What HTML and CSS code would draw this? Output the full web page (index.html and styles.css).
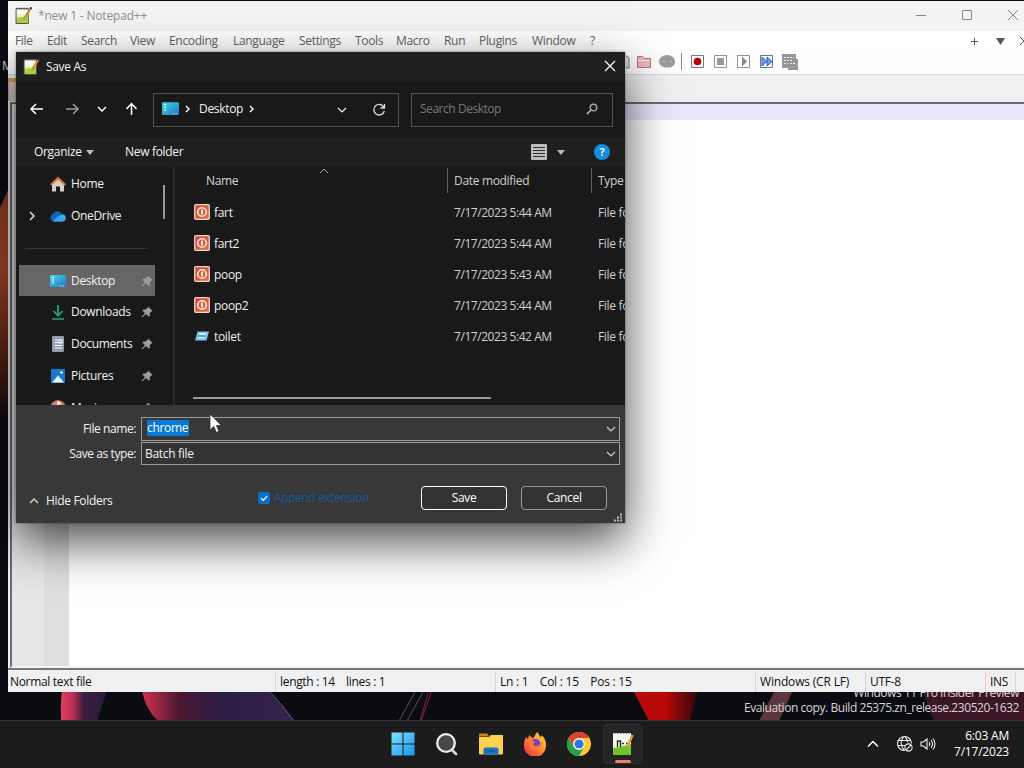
FILE: index.html
```html
<!DOCTYPE html>
<html lang="en">
  <head>
    <meta charset="UTF-8" />
    <meta name="viewport" content="width=device-width, initial-scale=1.0" />
    <title>*new 1 - Notepad++</title>
    <link rel="stylesheet" href="styles.css">
  </head>
  <body>
    <svg width="0" height="0" class="defs">
      <defs>
        <linearGradient id="gBlue" x1="0" y1="0" x2="1" y2="1"><stop offset="0" stop-color="#49d2e6"/><stop offset="1" stop-color="#1a7cc4"/></linearGradient>
        <linearGradient id="gWin" x1="0" y1="0" x2="1" y2="1"><stop offset="0" stop-color="#7fe0fb"/><stop offset="1" stop-color="#1698ee"/></linearGradient>
        <linearGradient id="gNote" x1="0" y1="0" x2="0" y2="1"><stop offset="0" stop-color="#fff"/><stop offset=".4" stop-color="#f2f6dc"/><stop offset="1" stop-color="#9ac93c"/></linearGradient>
        <linearGradient id="gPower" x1="0" y1="0" x2="1" y2="1"><stop offset="0" stop-color="#c84a3a"/><stop offset="1" stop-color="#d8774f"/></linearGradient>
        <linearGradient id="gRed" x1="0" y1="0" x2="1" y2="0"><stop offset="0" stop-color="#e04062"/><stop offset=".25" stop-color="#c02f54"/><stop offset=".5" stop-color="#3b1d3f"/><stop offset="1" stop-color="#2a1b3c"/></linearGradient>
        <linearGradient id="gPetal" x1="0" y1="0" x2="1" y2="0"><stop offset="0" stop-color="#d03050"/><stop offset=".25" stop-color="#4a1830"/><stop offset=".5" stop-color="#2c1d44"/><stop offset="1" stop-color="#33234a"/></linearGradient>
        <linearGradient id="gFlare" x1="0" y1="0" x2="1" y2="0"><stop offset="0" stop-color="#b80d0c"/><stop offset=".5" stop-color="#b80706"/><stop offset="1" stop-color="#2c0a0e"/></linearGradient>
        <linearGradient id="gOrange" x1="0" y1="0" x2="0" y2="1"><stop offset="0" stop-color="#8b3d24"/><stop offset=".35" stop-color="#a3482a"/><stop offset=".7" stop-color="#5c2412"/><stop offset="1" stop-color="#0b0c10"/></linearGradient>
        <linearGradient id="gFox" x1="1" y1="0" x2="0" y2="1"><stop offset="0" stop-color="#ffe14a"/><stop offset=".45" stop-color="#ff8a26"/><stop offset="1" stop-color="#f0265f"/></linearGradient>
        <symbol id="npp" viewBox="0 0 16 16">
          <path d="M1 1.500h11.500V15.500H1z" fill="url(#gNote)" stroke="#4d4d48" stroke-width=".9"/>
          <path d="M1.500 1.500h11" stroke="#555" stroke-width="1.600" stroke-dasharray="1.200 1"/>
          <path d="M2 11c3-2 6 0 10-3v7H2z" fill="#a8cf3c"/>
          <path d="M14.300 2L9.500 9.500 8.500 11.500" stroke="#d78a2b" stroke-width="1.900" fill="none"/>
          <path d="M15.500 .3l-1.200 1.700" stroke="#4b2b22" stroke-width="2"/>
        </symbol>
        <symbol id="monitor" viewBox="0 0 16 14">
          <rect x="0" y="1" width="16" height="12" rx="1" fill="url(#gBlue)"/>
          <path d="M2 3.500h2M2 6h2M2 8.500h2" stroke="#c9f8ff" stroke-width="1.300"/>
          <path d="M10 12h1.500M12.500 12H14" stroke="#bfeaff" stroke-width="1"/>
        </symbol>
        <symbol id="power" viewBox="0 0 16 16">
          <rect x=".7" y=".7" width="14.600" height="14.600" rx="1" fill="url(#gPower)" stroke="#f4d2c4" stroke-width="1.300"/>
          <circle cx="8" cy="8" r="4.300" fill="none" stroke="#fbe3d8" stroke-width="1.600"/>
          <path d="M8 5.500v5" stroke="#fff" stroke-width="1.600"/>
        </symbol>
        <symbol id="pin" viewBox="0 0 12 12">
          <path d="M7 .5l4.600 4.600-1.200.5-1.700 1.700.1 2.400-1.100 1L5 8.100 1.200 11.500.6 10.900 3.900 7.100 1.400 4.500l1-1.100 2.400.1L6.500 1.800z" fill="#9b9da0"/>
        </symbol>
        <symbol id="down" viewBox="0 0 10 10"><path d="M1 3l4 4 4-4" fill="none" stroke="currentColor" stroke-width="1.200"/></symbol>
      </defs>
    </svg>

    <svg class="wallpaper" viewBox="0 0 1024 768">
      <rect width="1024" height="768" fill="#0b0c11"/>
      <path d="M0 208C4 200 6 194 8 190V420H0z" fill="url(#gOrange)"/>
      <path d="M62 690h45q-5 15-10 31H61q-1-15 1-31z" fill="url(#gRed)"/>
      <path d="M142 690h125q14 14 27 31H158q-13-12-16-31z" fill="url(#gPetal)"/>
      <path d="M268 690q14 14 26 31" stroke="#6b607c" fill="none"/>
      <path d="M416 690l-17 31M424 690l-17 31" stroke="#55505a" fill="none"/>
      <path d="M432 690l-11 31M429 690l-9 31" stroke="#7d2440" fill="none"/>
      <path d="M633 690h65l-8 31h-41z" fill="url(#gFlare)"/>
      <path d="M775 690h18l-14 31h-20z" fill="#5c3740"/>
      <path d="M922 690h102v31h-90z" fill="#3b1726"/>
    </svg>
    <div class="desktop-label">M</div>
    <div class="watermark">
      <div class="wm-edition">Windows 11 Pro Insider Preview</div>
      <div class="wm-build">Evaluation copy. Build 25375.zn_release.230520-1632</div>
    </div>

    <main class="editor-window">
      <header class="titlebar">
        <svg class="app-icon" viewBox="0 0 16 16"><use href="#npp"/></svg>
        <span class="win-title">*new 1 - Notepad++</span>
        <svg class="win-controls" width="104" height="12" viewBox="0 0 104 12"><path d="M0 6.500h10M46.500 1.500h9v9h-9zM92 1l10 10M102 1L92 11" fill="none" stroke="#8d8587"/></svg>
      </header>
      <nav class="menubar">
        <span>File</span><span>Edit</span><span>Search</span><span>View</span><span>Encoding</span><span>Language</span><span>Settings</span><span>Tools</span><span>Macro</span><span>Run</span><span>Plugins</span><span>Window</span><span>?</span>
        <svg width="62" height="12" viewBox="0 0 62 12"><path d="M1 6.500h7M4.500 3v7M50 2l8 8M58 2l-8 8" stroke="#555" fill="none"/><path d="M26 3h9l-4.500 7z" fill="#555"/></svg>
      </nav>
      <div class="toolbar">
        <svg width="176" height="20" viewBox="0 0 176 20">
          <path d="M0 4h1l2 2v10H0" fill="#ddd" stroke="#777"/>
          <path d="M11.500 4.500h5l1.500 2h6.500v9h-13z" fill="#eab8bd" stroke="#b9747b"/><path d="M12 8.500h12" stroke="#fbe6e8"/>
          <path d="M38 3.500q3-1 6 0 5 1.500 5 6t-5 6h-5.500q-5.500-2-5.500-6t5-6z" fill="#9c9c9c"/><path d="M37 9.500h2M44 9.500h2" stroke="#ccc"/>
          <path d="M55.500 1v17" stroke="#888"/>
          <g fill="#fff" stroke="#8f9292"><path d="M65.500 3.500h12v12h-12z" stroke="#777"/><path d="M88.500 3.500h12v12h-12zM111.500 3.500h12v12h-12z"/><path d="M134.500 3.500h12v12h-12z" stroke="#62778c"/></g>
          <circle cx="71.500" cy="9.500" r="3.800" fill="#b60009"/>
          <path d="M91 6h7v7h-7z" fill="#999"/><path d="M116 4.500l5 5-5 5z" fill="#888"/>
          <path d="M136 5l5 4.500-5 4.500zM141 5l5 4.500-5 4.500z" fill="#6fa4f3" stroke="#285bb6"/>
          <path d="M156 2h14v5h2v11h-10v-2h-6z" fill="#969696"/><path d="M158 5.500h10M158 8.500h8M158 11.500h4M164 11.500h6" stroke="#eee" stroke-dasharray="2 1"/>
        </svg>
      </div>
      <div class="tabbar"><span class="tab-edge"></span></div>
      <div class="editor">
        <div class="gutter"></div>
        <div class="page"><div class="current-line"></div></div>
      </div>
      <footer class="statusbar">
        <span>Normal text file</span><span>length : 14 &nbsp;&nbsp; lines : 1</span><span>Ln : 1 &nbsp;&nbsp; Col : 15 &nbsp;&nbsp; Pos : 15</span><span>Windows (CR LF)</span><span>UTF-8</span><span>INS</span><span></span>
      </footer>
    </main>

    <section class="dialog">
      <header class="dialog-title">
        <svg class="app-icon" viewBox="0 0 16 16"><use href="#npp"/></svg>
        <span>Save As</span>
        <svg class="close" width="12" height="12" viewBox="0 0 12 12"><path d="M1 1l10 10M11 1L1 11" stroke="#fff" stroke-width="1.200"/></svg>
      </header>

      <div class="dialog-nav">
        <svg class="arrows" width="110" height="16" viewBox="0 0 110 16" fill="none" stroke="#fff" stroke-width="1.500">
          <path d="M14 8H2M7 3L2 8l5 5"/>
          <path d="M37 8h12M44 3l5 5-5 5" stroke="#999"/>
          <path d="M69 6l4 4 4-4"/>
          <path d="M102.500 14V3M97.500 8l5-5.500 5 5.500"/>
        </svg>
        <div class="address">
          <svg width="17" height="15"><use href="#monitor"/></svg>
          <svg class="chev" width="6" height="8" viewBox="0 0 6 8"><path d="M1 1l3 3-3 3" fill="none" stroke="#fff" stroke-width="1.400"/></svg>
          <span>Desktop</span>
          <svg class="chev" width="6" height="8" viewBox="0 0 6 8"><path d="M1 1l3 3-3 3" fill="none" stroke="#fff" stroke-width="1.400"/></svg>
          <svg class="drop" width="10" height="10"><use href="#down"/></svg>
          <svg class="refresh" width="14" height="14" viewBox="0 0 14 14"><path d="M12 4.500A5.300 5.300 0 1 0 12.300 8M12.500 1v4h-4" fill="none" stroke="#ddd" stroke-width="1.300"/></svg>
        </div>
        <div class="search">
          <span>Search Desktop</span>
          <svg width="12" height="12" viewBox="0 0 12 12"><circle cx="7.500" cy="4.500" r="3.300" fill="none" stroke="#a5a5a5" stroke-width="1.500"/><path d="M5.200 6.800L.8 11.200" stroke="#a5a5a5" stroke-width="1.800"/></svg>
        </div>
      </div>

      <div class="dialog-tools">
        <span class="organize">Organize</span><i class="caret"></i>
        <span class="new-folder">New folder</span>
        <svg class="view-icon" width="16" height="16" viewBox="0 0 16 16"><rect width="16" height="16" rx="1" fill="#bdbdbd"/><path d="M2 3.500h12M2 6.500h12M2 9.500h12M2 12.500h12" stroke="#2b2b2b"/></svg>
        <i class="caret"></i>
        <span class="help">?</span>
      </div>

      <div class="browser">
        <aside class="sidebar">
          <div class="place">
            <svg viewBox="0 0 16 16"><path d="M2 8l6-5 6 5v7.500h-4v-5H6v5H2z" fill="#d2d0cc"/><path d="M.8 9L8 2.200 15.200 9" fill="none" stroke="#d9822f" stroke-width="2.200"/></svg>
            <span>Home</span>
          </div>
          <div class="place">
            <svg class="expand" viewBox="0 0 8 10"><path d="M2 1l4 4-4 4" fill="none" stroke="#ddd" stroke-width="1.500"/></svg>
            <svg viewBox="0 0 16 16"><path d="M4 13.500a4 4 0 0 1-1-7.700 5 5 0 0 1 9 .7 3.500 3.500 0 0 1 .5 7z" fill="#1464b8"/><path d="M3 13.500h9.500A3.500 3.500 0 0 0 13 6.600Q8 7 3 13.500z" fill="#3aa8f0"/></svg>
            <span>OneDrive</span>
          </div>
          <div class="divider"></div>
          <div class="place selected">
            <svg viewBox="0 0 16 14"><use href="#monitor"/></svg>
            <span>Desktop</span><svg class="pin"><use href="#pin"/></svg>
          </div>
          <div class="place">
            <svg viewBox="0 0 16 16"><path d="M8 1v10M3.500 7L8 11.500 12.500 7M2 15h12" fill="none" stroke="#27a67a" stroke-width="1.700"/></svg>
            <span>Downloads</span><svg class="pin"><use href="#pin"/></svg>
          </div>
          <div class="place">
            <svg viewBox="0 0 16 16"><rect x="2" y="0" width="12" height="16" rx="1" fill="#8f9dad"/><path d="M4.500 4H8M4.500 6.500H8M9 4h3v3H9zM4.500 9.500h7.500M4.500 12h7.500" stroke="#fff" fill="none" stroke-width="1.100"/></svg>
            <span>Documents</span><svg class="pin"><use href="#pin"/></svg>
          </div>
          <div class="place">
            <svg viewBox="0 0 16 16"><rect x="1" y="1" width="14" height="14" rx="1" fill="#1678ce"/><path d="M2 14.500L8 7.500l6 7z" fill="#e8f6ff"/><circle cx="11.500" cy="4.500" r="1.300" fill="#fff"/></svg>
            <span>Pictures</span><svg class="pin"><use href="#pin"/></svg>
          </div>
          <div class="place">
            <svg viewBox="0 0 16 16"><circle cx="8" cy="8" r="7.800" fill="#d9785e"/><path d="M8 10V2l3 2" stroke="#fff" stroke-width="1.600" fill="none"/></svg>
            <span>Music</span><svg class="pin"><use href="#pin"/></svg>
          </div>
          <div class="side-scroll"></div>
        </aside>

        <div class="files">
          <svg class="sort" width="10" height="6" viewBox="0 0 10 6"><path d="M1 5l4-4 4 4" fill="none" stroke="#aaa"/></svg>
          <div class="file-row head"><span class="name">Name</span><span class="col">Date modified</span><span class="col">Type</span></div>
          <div class="file-row"><span class="name"><svg><use href="#power"/></svg>fart</span><span class="date">7/17/2023 5:44 AM</span><span>File folder</span></div>
          <div class="file-row"><span class="name"><svg><use href="#power"/></svg>fart2</span><span class="date">7/17/2023 5:44 AM</span><span>File folder</span></div>
          <div class="file-row"><span class="name"><svg><use href="#power"/></svg>poop</span><span class="date">7/17/2023 5:43 AM</span><span>File folder</span></div>
          <div class="file-row"><span class="name"><svg><use href="#power"/></svg>poop2</span><span class="date">7/17/2023 5:44 AM</span><span>File folder</span></div>
          <div class="file-row"><span class="name"><svg viewBox="0 0 16 16"><path d="M3.500 3.500H15L12.500 12.500H1z" fill="#7cc4ea"/><path d="M5 6h7M4.500 9.500h6" stroke="#e9f8ff" stroke-width="1.300"/><path d="M4 8h7.500" stroke="#2476ad"/></svg>toilet</span><span class="date">7/17/2023 5:42 AM</span><span>File folder</span></div>
          <div class="h-scroll"></div>
        </div>
      </div>

      <div class="form">
        <label>File name:</label>
        <div class="combo"><mark>chrome</mark><svg width="10" height="10"><use href="#down"/></svg></div>
        <label>Save as type:</label>
        <div class="combo type"><span>Batch file</span><svg width="10" height="10"><use href="#down"/></svg></div>
      </div>
      <div class="actions">
        <svg class="collapse" width="10" height="8" viewBox="0 0 10 8"><path d="M1 6l4-4 4 4" fill="none" stroke="#ccc" stroke-width="1.500"/></svg>
        <span class="hide-folders">Hide Folders</span>
        <svg class="check" width="12" height="12" viewBox="0 0 12 12"><rect width="12" height="12" rx="2" fill="#0a6ccb"/><path d="M3 6l2.200 2.200L9.200 4" fill="none" stroke="#e4f1ff" stroke-width="1.300"/></svg>
        <span class="append">Append extension</span>
        <button class="primary">Save</button>
        <button>Cancel</button>
      </div>
      <svg class="grip" width="9" height="9" viewBox="0 0 9 9"><path d="M6 1.500h2M3 4.500h2M6 4.500h2M0 7.500h2M3 7.500h2M6 7.500h2" stroke="#bbb" stroke-width="2"/></svg>
    </section>

    <svg class="cursor" width="14" height="22" viewBox="0 0 14 22"><path d="M1 1v16l3.800-3.500 2.600 6 2.600-1.200-2.600-5.700h5z" fill="#fff" stroke="#222" stroke-width=".7"/></svg>

    <footer class="taskbar">
      <div class="apps">
        <svg viewBox="0 0 24 24"><path d="M.5 .5h11v11H.5zM12.500 .5h11v11h-11zM.5 12.500h11v11H.5zM12.500 12.500h11v11h-11z" fill="url(#gWin)"/></svg>
        <svg viewBox="0 0 24 24"><path d="M17 18l4 4" stroke="#d5d5d5" stroke-width="2.800" stroke-linecap="round"/><circle cx="11" cy="11" r="8.800" fill="#48484a" stroke="#eee" stroke-width="2.300"/></svg>
        <svg viewBox="0 0 24 24"><path d="M0 1.500h8l2.500 3H0z" fill="#c28a12"/><path d="M0 5h10l2-2h12V21.500q0 1-1 1H1q-1 0-1-1z" fill="#fbd153"/><path d="M4.500 22.500v-5q0-2 2-2h11q2 0 2 2v5z" fill="#1477c4"/><path d="M8 19h8" stroke="#0d5490" stroke-width="1.500"/></svg>
        <svg viewBox="0 0 24 24"><path d="M14 0q2 2 3.500 5l1.500-1.500Q23.500 8 23 14a11 10.500 0 0 1-22 .5Q.5 9 3 5l2 2 1-4 4 3.500z" fill="url(#gFox)"/><circle cx="12.500" cy="12" r="5" fill="#7040cf"/><path d="M4 9q4-2 8 1l-2 2.500q4 3 7-.5 0 6-6 6-6-1-7-9z" fill="#ff762e"/></svg>
        <svg viewBox="0 0 24 24"><circle cx="12" cy="12" r="12" fill="#fccb32"/><path d="M1.600 6A12 12 0 0 1 22.400 6H12a6 6 0 0 0-5.200 9z" fill="#dd4234"/><path d="M1.600 6A12 12 0 0 0 12 24l5.200-9a6 6 0 0 1-10.400 0z" fill="#249e51"/><circle cx="12" cy="12" r="5.700" fill="#fff"/><circle cx="12" cy="12" r="4.600" fill="#2c77e4"/></svg>
        <div class="running">
          <svg viewBox="0 0 24 24"><path d="M2 1h18v22H2z" fill="#f4f5ee"/><path d="M2 16q8-1 18-4v11H2z" fill="#75c22c"/><path d="M3 1.500h16" stroke="#888" stroke-dasharray="1.500 1.500"/><path d="M6.500 15V9h3v6M11 11.500h2M15 11.500h2" fill="none" stroke="#24361e" stroke-width="1.400"/><path d="M21.500 3l-5 11" stroke="#e7a048" stroke-width="2.600"/></svg>
        </div>
      </div>
      <div class="tray">
        <svg width="12" height="8" viewBox="0 0 12 8"><path d="M1 6.500l5-5 5 5" fill="none" stroke="#fff" stroke-width="1.500"/></svg>
        <svg class="globe" width="17" height="17" viewBox="0 0 17 17" fill="none" stroke="#eee" stroke-width="1.100"><path d="M9 15.500a7 7 0 1 1 6.500-7M1.500 5.500h13M1.500 10.500H9M8.500 1.200q-3.500 3-3.300 7t3.300 7.300M8.500 1.200q3 3 3.200 6.300"/><circle cx="12.500" cy="12.500" r="3.600"/><path d="M10 15l5-5"/></svg>
        <svg class="volume" width="16" height="14" viewBox="0 0 16 14" fill="none" stroke="#eee" stroke-width="1.100"><path d="M1 5v4h2.500L7 12V2L3.500 5zM9 5q1.500 2 0 4M11 3q3 4 0 8M13 1.500q4 5.500 0 11"/></svg>
        <div class="clock"><div>6:03 AM</div><div>7/17/2023</div></div>
      </div>
    </footer>
  </body>
</html>
```

FILE: styles.css
```css
* {
  box-sizing: border-box;
}
body {
  margin: 0;
  position: relative;
  width: 1024px;
  height: 768px;
  overflow: hidden;
  background: #0b0c11;
  font-family: "Open Sans", "Noto Sans", sans-serif;
  font-size: 12px;
  letter-spacing: -0.32px;
  line-height: 16px;
  white-space: nowrap;
}
svg {
  display: block;
  flex: none;
}
.defs {
  position: absolute;
}
.wallpaper {
  position: absolute;
  left: 0;
  top: 0;
  width: 1024px;
  height: 768px;
}
.desktop-label {
  position: absolute;
  left: 2px;
  top: 58px;
  color: #ccc;
}
.watermark {
  position: absolute;
  right: 5px;
  top: 685px;
  text-align: right;
  color: #d8d5d7;
  letter-spacing: -0.44px;
}
.wm-edition {
  height: 15px;
}

/* Notepad++ window */
.editor-window {
  position: absolute;
  left: 8px;
  top: 1px;
  width: 1020px;
  height: 691px;
  display: flex;
  flex-direction: column;
  background: #f0f0f0;
  overflow: hidden;
}
.titlebar {
  height: 30px;
  display: flex;
  align-items: center;
  padding-left: 7px;
  background: #f3f3f3;
  color: #8f8f8f;
}
.app-icon {
  width: 17px;
  height: 17px;
  margin-bottom: 2px;
}
.win-title {
  margin-left: 6px;
  letter-spacing: -0.18px;
}
.win-controls {
  margin-left: auto;
  margin-right: 8px;
  margin-bottom: 2px;
}
.menubar {
  height: 19px;
  display: grid;
  grid-template-columns: 32px 34px 49px 39px 64px 66px 56px 41px 48px 35px 53px 58px 380px 62px;
  align-items: center;
  padding-left: 7px;
  background: #fff;
  color: #646464;
}
.toolbar {
  height: 25px;
  padding: 2px 0 0 618px;
  background: #fdfdfd;
  border-bottom: 1px solid #dadada;
}
.tabbar {
  height: 27px;
  background: #f0f0f0;
}
.tab-edge {
  display: block;
  width: 9px;
  height: 23px;
  margin-top: 3px;
  border-top: 4px solid #d39a68;
  border-left: 1px solid #b9a79c;
  background: #d6c8c2;
}
.editor {
  flex: 1;
  display: flex;
  margin-left: 2px;
  border-top: 2px solid #6b6b70;
  border-left: 2px solid #6b6b70;
  border-bottom: 2px solid #f4f4f4;
  background: #fff;
}
.gutter {
  width: 57px;
  background: linear-gradient(90deg, #e6e6e6 32px, #dfdfdf 32px);
}
.page {
  flex: 1;
}
.current-line {
  height: 16px;
  background: #e8e8ff;
}
.statusbar {
  height: 24px;
  border-top: 2px solid #77777a;
  display: grid;
  grid-template-columns: 268px 220px 260px 110px 120px 30px 12px;
  color: #111;
  padding-top: 2px;
}
.statusbar span {
  padding: 2px 0 0 4px;
  border-right: 1px solid #d5d5d5;
}
.statusbar span:nth-child(3) {
  letter-spacing: -0.25px;
}
.statusbar span:nth-child(4) {
  letter-spacing: -0.18px;
}
.statusbar span:first-child {
  padding-left: 2px;
}

/* Save As dialog */
.dialog {
  position: absolute;
  left: 16px;
  top: 52px;
  width: 609px;
  height: 471px;
  background: #383838;
  color: #f2f2f2;
  box-shadow: 0 0 2px rgba(0, 0, 0, 0.5), 0 18px 46px rgba(0, 0, 0, 0.72);
}
.dialog-title {
  height: 30px;
  display: flex;
  align-items: center;
  padding: 0 9px 0 7px;
  background: #1f1f1f;
}
.dialog-title span {
  margin-left: 6px;
}
.close {
  margin-left: auto;
  margin-bottom: 2px;
}
.dialog-nav {
  height: 55px;
  display: flex;
  align-items: center;
  padding: 0 12px 0 13px;
  background: #191919;
}
.arrows {
  margin-right: 14px;
  margin-bottom: 2px;
}
.address,
.search {
  display: flex;
  align-items: center;
  height: 34px;
  border: 1px solid #555;
  padding-bottom: 2px;
}
.address {
  width: 246px;
  padding-left: 8px;
}
.address .chev {
  margin: 0 8px 0 6px;
}
.address .drop {
  margin-top: 3px;
  margin-left: auto;
  margin-right: 25px;
}
.refresh {
  margin-top: 3px;
  margin-right: 12px;
}
.search {
  width: 202px;
  margin-left: 12px;
  padding-left: 8px;
  padding-right: 14px;
  justify-content: space-between;
  color: #777;
  letter-spacing: -0.46px;
}
.dialog-tools {
  height: 30px;
  display: flex;
  align-items: center;
  padding: 0 15px 0 18px;
  background: #1f1f1f;
}
.organize {
  width: 52px;
}
.caret {
  border: 4px solid transparent;
  border-top: 5px solid #bbb;
  border-bottom: 0;
}
.new-folder {
  margin-left: 31px;
}
.view-icon {
  margin-left: auto;
  margin-right: 10px;
}
.help {
  width: 16px;
  height: 16px;
  margin-left: 29px;
  border-radius: 50%;
  background: #128ee0;
  font-weight: bold;
  font-size: 11px;
  text-align: center;
}
.browser {
  display: flex;
  height: 238px;
  overflow: hidden;
  background: #191919;
}
.sidebar {
  position: relative;
  width: 159px;
  padding-top: 1px;
  border-right: 2px solid #292929;
}
.place {
  position: relative;
  display: flex;
  align-items: center;
  height: 32px;
  width: 136px;
  margin-left: 3px;
  padding: 0 2px 0 31px;
}
.place svg {
  width: 16px;
  height: 16px;
}
.place span {
  margin-left: 5px;
}
.place .pin {
  width: 12px;
  height: 12px;
  margin-left: auto;
}
.place .expand {
  position: absolute;
  left: 9px;
  width: 8px;
  height: 10px;
}
.place.selected {
  height: 31px;
  margin-top: 1px;
  background: #666;
}
.divider {
  height: 32px;
  width: 122px;
  margin-left: 9px;
  background: linear-gradient(#383838, #383838) 0 16px / 100% 1px no-repeat;
}
.side-scroll {
  position: absolute;
  right: 8px;
  top: 18px;
  width: 2px;
  height: 34px;
  background: #999;
}
.files {
  position: relative;
  flex: 1;
  min-width: 0;
  overflow: hidden;
}
.sort {
  position: absolute;
  left: 144px;
  top: 1px;
}
.file-row {
  display: grid;
  grid-template-columns: 279px 144px 100px;
  align-items: center;
  height: 31px;
  color: #cfcfcf;
}
.file-row .name {
  display: flex;
  align-items: center;
  padding-left: 19px;
  color: #f0f0f0;
}
.file-row svg {
  width: 16px;
  height: 16px;
  margin-right: 4px;
  margin-bottom: 2px;
}
.file-row .date {
  letter-spacing: -0.44px;
}
.file-row.head {
  height: 30px;
  padding-bottom: 3px;
}
.file-row.head .name {
  padding-left: 31px;
  color: #d5d5d5;
}
.file-row .col {
  margin-left: -7px;
  padding: 5px 0 4px 6px;
  border-left: 1px solid #606060;
}
.h-scroll {
  width: 298px;
  height: 2px;
  margin: 45px 0 0 18px;
  background: #999;
}
.form {
  display: grid;
  grid-template-columns: 120px 479px;
  grid-template-rows: 24px 24px;
  gap: 1px 5px;
  padding-top: 12px;
}
.form label {
  text-align: right;
  line-height: 24px;
  letter-spacing: -0.42px;
}
.combo {
  display: flex;
  align-items: center;
  justify-content: space-between;
  height: 24px;
  border: 1px solid #9b9b9b;
  padding: 0 3px 0 5px;
  background: #383838;
}
.combo svg {
  color: #ccc;
}
.combo.type {
  height: 23px;
  padding-left: 3px;
  background: #333;
}
.combo mark {
  padding: 0 1px 0 0;
  margin-top: -2px;
  height: 16px;
  background: #0a78d6;
  color: #fff;
}
.actions {
  display: flex;
  align-items: center;
  height: 26px;
  margin-top: 19px;
  padding: 0 18px 0 13px;
}
.collapse {
  margin-top: 6px;
}
.hide-folders {
  width: 66px;
  margin-left: 7px;
  padding-top: 6px;
}
.check {
  margin-left: 146px;
}
.append {
  margin-left: 4px;
  color: #175a9f;
  letter-spacing: -0.42px;
}
.actions button {
  width: 86px;
  height: 24px;
  margin-left: 15px;
  padding: 0 0 1px;
  border: 1px solid #999;
  border-radius: 4px;
  background: #333;
  color: #fff;
  font: inherit;
  letter-spacing: inherit;
}
.actions .primary {
  margin-left: auto;
  margin-right: -1px;
  border-color: #fff;
}
.grip {
  position: absolute;
  right: 2px;
  bottom: 1px;
}
.cursor {
  position: absolute;
  left: 209px;
  top: 413px;
}

/* Taskbar */
.taskbar {
  position: absolute;
  left: 0;
  top: 720px;
  width: 1024px;
  height: 48px;
  display: flex;
  justify-content: space-between;
  background: #1c1c1c;
  border-top: 1px solid #363638;
  color: #fff;
}
.apps {
  display: flex;
  align-items: center;
  gap: 20px;
  margin-left: 391px;
  padding-bottom: 1px;
}
.apps svg {
  width: 24px;
  height: 24px;
}
.running {
  width: 40px;
  height: 40px;
  margin-left: -8px;
  padding: 7px;
  border: 1px solid #303030;
  border-radius: 4px;
  background: #252525;
}
.running::after {
  content: "";
  display: block;
  width: 16px;
  height: 3px;
  margin: 4px 0 0 4px;
  border-radius: 2px;
  background: #f07d76;
}
.tray {
  display: flex;
  align-items: center;
  padding: 0 15px 2px 0;
}
.globe {
  margin-left: 17px;
}
.volume {
  margin-left: 7px;
}
.clock {
  width: 72px;
  margin-left: 1px;
  text-align: right;
  letter-spacing: -0.2px;
}
```
